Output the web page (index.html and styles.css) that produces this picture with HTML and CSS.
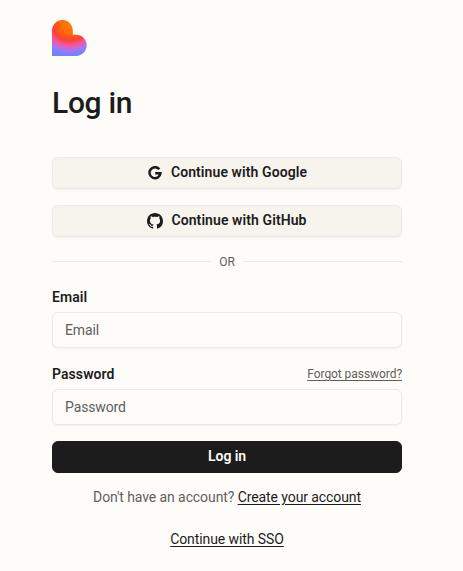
FILE: index.html
```html
<!DOCTYPE html>
<html lang="en">
<head>
<meta charset="utf-8">
<title>Log in</title>
<link rel="stylesheet" href="styles.css">
</head>
<body>
<main class="login">
  <svg class="logo" viewBox="0 0 35 36" aria-hidden="true">
    <defs>
      <radialGradient id="heart" gradientUnits="userSpaceOnUse" cx="0" cy="0" r="1" gradientTransform="translate(18 5) rotate(90) scale(32 36)">
        <stop offset="0.02" stop-color="#ff7b00"/>
        <stop offset="0.28" stop-color="#ff6a0a"/>
        <stop offset="0.48" stop-color="#ff4030"/>
        <stop offset="0.64" stop-color="#f556a0"/>
        <stop offset="0.8" stop-color="#a078f5"/>
        <stop offset="0.93" stop-color="#7183ff"/>
      </radialGradient>
    </defs>
    <path fill="url(#heart)" d="M0 10.500C0 4.700 4.700 0 10.400 0s10.400 4.700 10.400 10.500v4.200h3.400C30 14.700 34.700 19.500 34.700 25.300S30 36 24.200 36H0z"/>
  </svg>
  <h1 class="title">Log in</h1>
  <form class="form">
    <button class="button provider" type="button">
      <svg class="icon google" viewBox="0 0 14 14" aria-hidden="true"><path d="M11.300 3.200A5.500 5.500 0 1 0 12.500 7.200H7.200" fill="none" stroke="currentColor" stroke-width="2.500"/></svg>
      <span class="google-label">Continue with Google</span>
    </button>
    <button class="button provider github-button" type="button">
      <svg class="icon github" viewBox="0 0 16 16" aria-hidden="true"><path fill="currentColor" d="M8 0C3.580 0 0 3.580 0 8c0 3.540 2.290 6.530 5.470 7.590.4.070.55-.17.55-.38 0-.19-.01-.82-.01-1.490-2.010.37-2.530-.49-2.690-.94-.09-.23-.48-.94-.82-1.130-.28-.15-.68-.52-.01-.53.63-.01 1.080.58 1.230.82.72 1.210 1.870.87 2.330.66.07-.52.28-.87.51-1.070-1.780-.2-3.640-.89-3.640-3.950 0-.87.31-1.590.82-2.150-.08-.2-.36-1.020.08-2.120 0 0 .67-.21 2.200.82.64-.18 1.320-.27 2-.27s1.360.09 2 .27c1.530-1.040 2.200-.82 2.200-.82.44 1.100.16 1.920.08 2.120.51.56.82 1.270.82 2.150 0 3.070-1.870 3.750-3.650 3.950.29.25.54.73.54 1.480 0 1.070-.01 1.930-.01 2.200 0 .21.15.46.55.38A8.010 8.010 0 0 0 16 8c0-4.420-3.580-8-8-8z"/></svg>
      <span class="github-label">Continue with GitHub</span>
    </button>
    <div class="divider"><span>OR</span></div>
    <div class="label-row"><label for="email">Email</label></div>
    <input class="field" id="email" type="email" placeholder="Email">
    <div class="label-row password-row"><label for="password">Password</label><a class="forgot" href="#">Forgot password?</a></div>
    <input class="field" id="password" type="password" placeholder="Password">
    <button class="button submit" type="button"><span>Log in</span></button>
  </form>
  <p class="signup">Don't have an account? <a href="#">Create your account</a></p>
  <p class="sso"><a href="#">Continue with SSO</a></p>
</main>
</body>
</html>
```
FILE: styles.css
```css
* { box-sizing: border-box; }

body {
  margin: 0;
  background: #fdfcf8;
  color: #1c1c1c;
  font: 400 14px/20px Roboto, "Liberation Sans", sans-serif;
}

.login { width: 350px; margin: 0 0 0 52px; padding-top: 20px; }
.logo { display: block; width: 35px; height: 36px; }

.title {
  margin: 29px 0 36px;
  font-size: 30px;
  line-height: 36px;
  font-weight: 500;
  letter-spacing: -.3px;
}

.form { display: flex; flex-direction: column; }

.button {
  display: flex;
  align-items: center;
  justify-content: center;
  height: 32px;
  padding: 0;
  border: 1px solid #eceae6;
  border-radius: 6px;
  font: inherit;
  font-weight: 600;
  color: #1c1c1c;
}

.button span { padding-bottom: 2px; }

.provider {
  gap: 8px;
  background: #f7f4ed;
  box-shadow: 0 1px 2px rgba(0, 0, 0, .05);
}

.github-button { margin-top: 16px; }
.icon { width: 16px; height: 16px; }
.google { padding: 1px; }
.google-label, .github-label { letter-spacing: .09px; }

.divider {
  display: flex;
  align-items: center;
  gap: 8px;
  height: 16px;
  margin: 16px 0 18px;
  color: #5f5f5d;
  font-size: 12px;
}

.divider span { padding-top: 2px; }

.divider::before,
.divider::after { content: ""; flex: 1; height: 1px; background: #eceae6; }

.label-row {
  display: flex;
  align-items: center;
  justify-content: space-between;
  height: 20px;
  margin-bottom: 5px;
  font-weight: 600;
  letter-spacing: .08px;
}

.password-row { margin-top: 16px; }

.forgot { color: #5f5f5d; font-size: 12px; font-weight: 400; letter-spacing: -.06px; }

.field {
  width: 100%;
  height: 36px;
  padding: 0 12px;
  border: 1px solid #eceae6;
  border-radius: 6px;
  background: #fdfcf8;
  box-shadow: 0 1px 2px rgba(0, 0, 0, .05);
  font: inherit;
  letter-spacing: -.12px;
}

.field::placeholder { color: #5f5f5d; opacity: 1; }

.submit {
  margin-top: 16px;
  border-color: #1c1c1c;
  background: #1c1c1c;
  color: #fdfcf8;
  letter-spacing: -.1px;
}

.signup, .sso { margin: 0; text-align: center; letter-spacing: -.09px; }
.signup { margin-top: 14px; color: #5f5f5d; }
.sso { margin-top: 22px; }
a { text-underline-offset: 2px; }
.signup a, .sso a { color: #1c1c1c; }
```
